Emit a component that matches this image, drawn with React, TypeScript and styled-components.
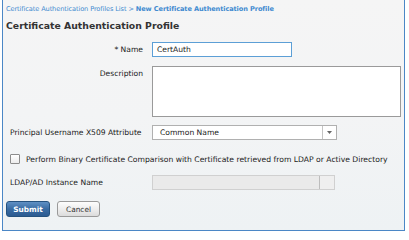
import React from "react";
import styled, { createGlobalStyle } from "styled-components";

const Global = createGlobalStyle`
  html, body {
    margin: 0;
    padding: 0;
    background: #ffffff;
  }
  body {
    font-family: "DejaVu Sans", Verdana, sans-serif;
  }
`;

const Page = styled.div`
  width: 409px;
  height: 233px;
  box-sizing: border-box;
  padding: 0 4px 2px 2px;
  background: #ffffff;
`;

const Panel = styled.div`
  height: 100%;
  box-sizing: border-box;
  border: 1px solid #4b87c6;
  border-top: none;
  background: linear-gradient(180deg, #f5f5f5 0%, #f3f4f5 50%, #eef2f4 100%);
  padding: 5px 0 0 3px;
  overflow: hidden;
`;

const Crumbs = styled.div`
  font-size: 6.6px;
  color: #3f8ad0;
  line-height: 9px;
  white-space: nowrap;
  letter-spacing: -0.1px;
`;

const Current = styled.span`
  font-weight: bold;
`;

const Title = styled.h1`
  margin: 5px 0 0 0;
  font-size: 9.3px;
  font-weight: bold;
  color: #333333;
  line-height: 13px;
  white-space: nowrap;
`;

const Form = styled.div`
  display: flex;
  flex-direction: column;
  padding-left: 4px;
`;

const Row = styled.div<{ $top: number; $align?: string }>`
  display: flex;
  align-items: ${(p) => p.$align || "center"};
  margin-top: ${(p) => p.$top}px;
`;

const Label = styled.label<{ $right?: boolean; $pad?: number }>`
  width: 142px;
  box-sizing: border-box;
  padding-right: ${(p) => (p.$right ? 9 : 0)}px;
  padding-top: ${(p) => p.$pad || 0}px;
  text-align: ${(p) => (p.$right ? "right" : "left")};
  font-size: 7.6px;
  color: #222222;
  white-space: nowrap;
`;

const TextInput = styled.div<{ $width: number; $focus?: boolean }>`
  width: ${(p) => p.$width}px;
  height: 15px;
  box-sizing: border-box;
  border: 1px solid ${(p) => (p.$focus ? "#5c9fd6" : "#a9a9a9")};
  background: #ffffff;
  font-size: 7.6px;
  color: #222222;
  padding-left: 4px;
  display: flex;
  align-items: center;
`;

const TextArea = styled.div`
  width: 249px;
  height: 51px;
  box-sizing: border-box;
  border: 1px solid #9a9a9a;
  background: #ffffff;
`;

const Select = styled.div`
  width: 185px;
  height: 15px;
  box-sizing: border-box;
  border: 1px solid #b0b0b0;
  background: #ffffff;
  display: flex;
  font-size: 7.6px;
  color: #222222;
`;

const SelectText = styled.div`
  flex: 1;
  display: flex;
  align-items: center;
  padding-left: 7px;
`;

const Arrow = styled.div`
  width: 13px;
  border-left: 1px solid #c4c4c4;
  display: flex;
  align-items: center;
  justify-content: center;
`;

const Disabled = styled.div`
  width: 183px;
  height: 15px;
  box-sizing: border-box;
  border: 1px solid #d0d0d0;
  background: #eaeaea;
  display: flex;
  justify-content: flex-end;
`;

const DisabledEnd = styled.div`
  width: 14px;
  border-left: 1px solid #bdbdbd;
  background: #efefef;
`;

const Check = styled.span`
  width: 10px;
  height: 10px;
  box-sizing: border-box;
  border: 1px solid #8c8c8c;
  border-radius: 1px;
  background: linear-gradient(180deg, #ffffff, #ececec);
  margin-right: 6px;
`;

const CheckText = styled.span`
  font-size: 7.65px;
  color: #222222;
  white-space: nowrap;
`;

const Buttons = styled.div`
  display: flex;
  gap: 7px;
  margin-top: 11px;
`;

const Button = styled.button<{ $primary?: boolean }>`
  height: 16px;
  box-sizing: border-box;
  padding: 0;
  border-radius: 3px;
  font-family: "DejaVu Sans", Verdana, sans-serif;
  font-size: 7.4px;
  font-weight: ${(p) => (p.$primary ? "bold" : "normal")};
  color: ${(p) => (p.$primary ? "#ffffff" : "#333333")};
  border: 1px solid ${(p) => (p.$primary ? "#25527f" : "#9a9a9a")};
  background: ${(p) =>
    p.$primary
      ? "linear-gradient(180deg, #5f90c4 0%, #3a6ca3 50%, #2c5b91 100%)"
      : "linear-gradient(180deg, #fdfdfd 0%, #eeeeee 50%, #dcdcdc 100%)"};
  width: ${(p) => (p.$primary ? 44 : 43)}px;
`;

export default function App() {
  return (
    <Page>
      <Global />
      <Panel>
        <Crumbs>
          Certificate Authentication Profiles List &gt;{" "}
          <Current>New Certificate Authentication Profile</Current>
        </Crumbs>
        <Title>Certificate Authentication Profile</Title>
        <Form>
          <Row $top={10}>
            <Label $right>* Name</Label>
            <TextInput $width={140} $focus>
              CertAuth
            </TextInput>
          </Row>
          <Row $top={9} $align="flex-start">
            <Label $right $pad={3}>
              Description
            </Label>
            <TextArea />
          </Row>
          <Row $top={8}>
            <Label>Principal Username X509 Attribute</Label>
            <Select>
              <SelectText>Common Name</SelectText>
              <Arrow>
                <svg width="5" height="3" viewBox="0 0 5 3">
                  <path d="M0 0 L5 0 L2.5 3 Z" fill="#666666" />
                </svg>
              </Arrow>
            </Select>
          </Row>
          <Row $top={14}>
            <Check />
            <CheckText>
              Perform Binary Certificate Comparison with Certificate retrieved from LDAP or Active
              Directory
            </CheckText>
          </Row>
          <Row $top={11}>
            <Label>LDAP/AD Instance Name</Label>
            <Disabled>
              <DisabledEnd />
            </Disabled>
          </Row>
        </Form>
        <Buttons>
          <Button $primary>Submit</Button>
          <Button>Cancel</Button>
        </Buttons>
      </Panel>
    </Page>
  );
}
